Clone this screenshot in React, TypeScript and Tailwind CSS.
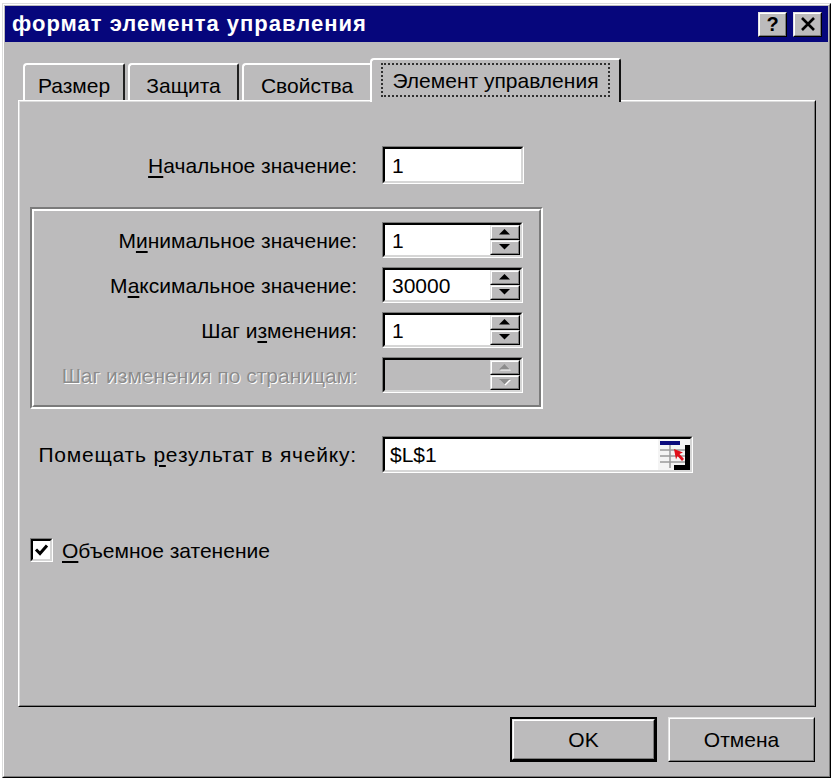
import React from 'react';

type BoxProps = { className?: string; innerClassName?: string; children?: React.ReactNode };

// raised 3d bevel (buttons, spinners)
function Raised({ className = '', innerClassName = '', children }: BoxProps) {
  return (
    <div className={`border border-t-[#e4e4e4] border-l-[#e4e4e4] border-r-black border-b-black ${className}`}>
      <div
        className={`flex h-full w-full items-center justify-center border border-t-white border-l-white border-r-[#7b7b7b] border-b-[#7b7b7b] ${innerClassName}`}
      >
        {children}
      </div>
    </div>
  );
}

// sunken 3d bevel (edit boxes, checkbox)
function Sunken({ className = '', innerClassName = '', children }: BoxProps) {
  return (
    <div className={`border border-t-[#7b7b7b] border-l-[#7b7b7b] border-r-white border-b-white ${className}`}>
      <div
        className={`flex h-full w-full border-2 border-t-black border-l-black border-r-[#d6d6d6] border-b-[#d6d6d6] ${innerClassName}`}
      >
        {children}
      </div>
    </div>
  );
}

function Key({ children }: { children: React.ReactNode }) {
  return <span className="underline decoration-[1.5px] underline-offset-[3px]">{children}</span>;
}

function Arrow({ down, disabled }: { down?: boolean; disabled?: boolean }) {
  const pts = down ? '0,0 11,0 5.5,5.5' : '0,5.5 11,5.5 5.5,0';
  return (
    <svg width="12" height="7" viewBox="0 0 12 7" className="block">
      {disabled && <polygon points={pts} transform="translate(1,1)" fill="#ffffff" />}
      <polygon points={pts} fill={disabled ? '#8c8c8c' : '#000000'} />
    </svg>
  );
}

function Spin({ disabled }: { disabled?: boolean }) {
  return (
    <div className="flex h-full w-[30px] flex-col">
      <Raised className="h-1/2 w-full bg-[#bcbbbc]">
        <Arrow disabled={disabled} />
      </Raised>
      <Raised className="h-1/2 w-full bg-[#bcbbbc]">
        <Arrow down disabled={disabled} />
      </Raised>
    </div>
  );
}

function SpinEdit({ value, disabled }: { value?: string; disabled?: boolean }) {
  return (
    <Sunken
      className="h-[36px] w-[141px]"
      innerClassName={disabled ? 'bg-[#bcbbbc] items-center' : 'bg-white items-center'}
    >
      <span className="flex-1 pl-[7px] text-[21px] leading-none text-black">{value}</span>
      <Spin disabled={disabled} />
    </Sunken>
  );
}

function RefIcon() {
  return (
    <svg width="32" height="31" viewBox="0 0 32 31" className="block">
      <rect x="0" y="0" width="32" height="31" fill="#f4f4f4" />
      <rect x="2" y="2" width="20" height="4" fill="#0a0a7c" />
      <line x1="2" y1="11" x2="27" y2="11" stroke="#9a9a9a" strokeWidth="1.5" />
      <line x1="2" y1="17" x2="27" y2="17" stroke="#9a9a9a" strokeWidth="1.5" />
      <line x1="2" y1="23" x2="27" y2="23" stroke="#9a9a9a" strokeWidth="1.5" />
      <line x1="12" y1="6" x2="12" y2="29" stroke="#9a9a9a" strokeWidth="1.5" />
      <rect x="27" y="6" width="5" height="25" fill="#000000" />
      <rect x="16" y="26" width="16" height="5" fill="#000000" />
      <polygon points="16,10 25,13.5 21.5,15 26,20 24,22 19.5,17 18,20.5" fill="#e0101a" />
    </svg>
  );
}

export default function App() {
  const groupRows = [
    { label: <>М<Key>и</Key>нимальное значение:</>, value: '1' },
    { label: <>М<Key>а</Key>ксимальное значение:</>, value: '30000' },
    { label: <>Шаг и<Key>з</Key>менения:</>, value: '1' },
  ];

  return (
    <div className="h-[782px] w-[838px] bg-white pl-[2px] pt-[3px] font-['Liberation_Sans',Arial,sans-serif]">
      {/* window frame */}
      <div className="h-[775px] w-[829px] border border-t-[#dcdcdc] border-l-[#dcdcdc] border-r-black border-b-black">
        <div className="flex h-full w-full flex-col border border-t-white border-l-white border-r-[#7b7b7b] border-b-[#7b7b7b] bg-[#bcbbbc] p-px">
          {/* title bar */}
          <div className="flex h-[36px] items-center justify-between bg-[#06067c] pl-[7px] pr-[6px]">
            <span className="text-[22px] font-bold leading-none tracking-[1px] text-white">формат элемента управления</span>
            <div className="flex gap-[6px]">
              <Raised className="h-[25px] w-[29px] bg-[#bcbbbc]">
                <span className="text-[20px] font-bold leading-none text-black">?</span>
              </Raised>
              <Raised className="h-[25px] w-[29px] bg-[#bcbbbc]">
                <svg width="16" height="14" viewBox="0 0 16 14" className="block">
                  <path d="M2 1 L14 13 M14 1 L2 13" stroke="#000" strokeWidth="2.6" />
                </svg>
              </Raised>
            </div>
          </div>

          {/* body */}
          <div className="flex flex-1 flex-col pl-[13px] pr-[12px] pt-[16px]">
            {/* tabs */}
            <div className="flex h-[42px] items-end pl-[5px] text-[21px] leading-none text-black">
              <div className="flex h-[37px] w-[102px] items-center justify-center rounded-tl-[4px] rounded-tr-[2px] border-l-2 border-t-2 border-r-2 border-l-white border-t-white border-r-[#202020] pt-[6px]">
                Размер
              </div>
              <div className="ml-[3px] flex h-[37px] w-[111px] items-center justify-center rounded-tl-[4px] rounded-tr-[2px] border-l-2 border-t-2 border-r-2 border-l-white border-t-white border-r-[#202020] pt-[6px]">
                Защита
              </div>
              <div className="ml-[3px] flex h-[37px] w-[128px] items-center justify-center rounded-tl-[4px] border-l-2 border-t-2 border-l-white border-t-white pt-[6px]">
                Свойства
              </div>
              <div className="relative z-10 -mb-[2px] flex h-[44px] w-[251px] items-center justify-center rounded-tl-[4px] rounded-tr-[3px] border-l-2 border-t-2 border-r-2 border-l-white border-t-white border-r-[#101010] bg-[#bcbbbc] pb-[2px]">
                <span className="border-2 border-dotted border-[#303030] px-[9px] pb-[4px] pt-[5px]">Элемент управления</span>
              </div>
            </div>

            {/* tab panel */}
            <div className="h-[607px] border border-t-white border-l-white border-r-black border-b-black">
              <div className="h-full w-full border border-t-[#dcdcdc] border-l-[#dcdcdc] border-r-[#7b7b7b] border-b-[#7b7b7b] text-[21px] leading-none text-black">
                {/* initial value */}
                <div className="mt-[44px] grid grid-cols-[337px_142px] items-center gap-x-[25px]">
                  <span className="text-right">
                    <Key>Н</Key>ачальное значение:
                  </span>
                  <Sunken className="h-[38px] w-[142px]" innerClassName="bg-white items-center">
                    <span className="pl-[7px]">1</span>
                  </Sunken>
                </div>

                {/* group */}
                <div className="ml-[10px] mt-[23px] h-[202px] w-[513px] border-2 border-t-[#7b7b7b] border-l-[#7b7b7b] border-r-white border-b-white">
                  <div className="flex h-full w-full flex-col gap-[9px] border-2 border-t-white border-l-white border-r-[#7b7b7b] border-b-[#7b7b7b] pt-[11px]">
                    {groupRows.map((r, i) => (
                      <div key={i} className="grid grid-cols-[323px_141px] items-center gap-x-[25px]">
                        <span className="text-right">{r.label}</span>
                        <SpinEdit value={r.value} />
                      </div>
                    ))}
                    <div className="grid grid-cols-[323px_141px] items-center gap-x-[25px]">
                      <span className="text-right text-[#8c8c8c] [text-shadow:1px_1px_0_#ffffff]">
                        Шаг изменения по страницам:
                      </span>
                      <SpinEdit disabled />
                    </div>
                  </div>
                </div>

                {/* linked cell */}
                <div className="mt-[27px] grid grid-cols-[337px_311px] items-center gap-x-[25px]">
                  <span className="text-right tracking-[0.8px]">
                    Помещать <Key>р</Key>езультат в ячейку:
                  </span>
                  <Sunken className="h-[37px] w-[311px]" innerClassName="bg-white items-center">
                    <span className="flex-1 pl-[5px]">$L$1</span>
                    <RefIcon />
                  </Sunken>
                </div>

                {/* 3d shading checkbox */}
                <div className="ml-[10px] mt-[65px] flex items-center gap-[9px]">
                  <Sunken className="h-[24px] w-[23px]" innerClassName="bg-white items-center justify-center">
                    <svg width="15" height="14" viewBox="0 0 15 14" className="block">
                      <path d="M2 6.5 L6 10.5 L13 2.5" fill="none" stroke="#000" strokeWidth="3" />
                    </svg>
                  </Sunken>
                  <span>
                    <Key>О</Key>бъемное затенение
                  </span>
                </div>
              </div>
            </div>

            {/* dialog buttons */}
            <div className="mt-[10px] flex justify-end gap-[11px] pr-px text-[21px] leading-none text-black">
              <div className="h-[45px] w-[147px] border-2 border-black">
                <Raised className="h-full w-full bg-[#bcbbbc]">OK</Raised>
              </div>
              <Raised className="h-[45px] w-[147px] bg-[#bcbbbc]">Отмена</Raised>
            </div>
          </div>
        </div>
      </div>
    </div>
  );
}
